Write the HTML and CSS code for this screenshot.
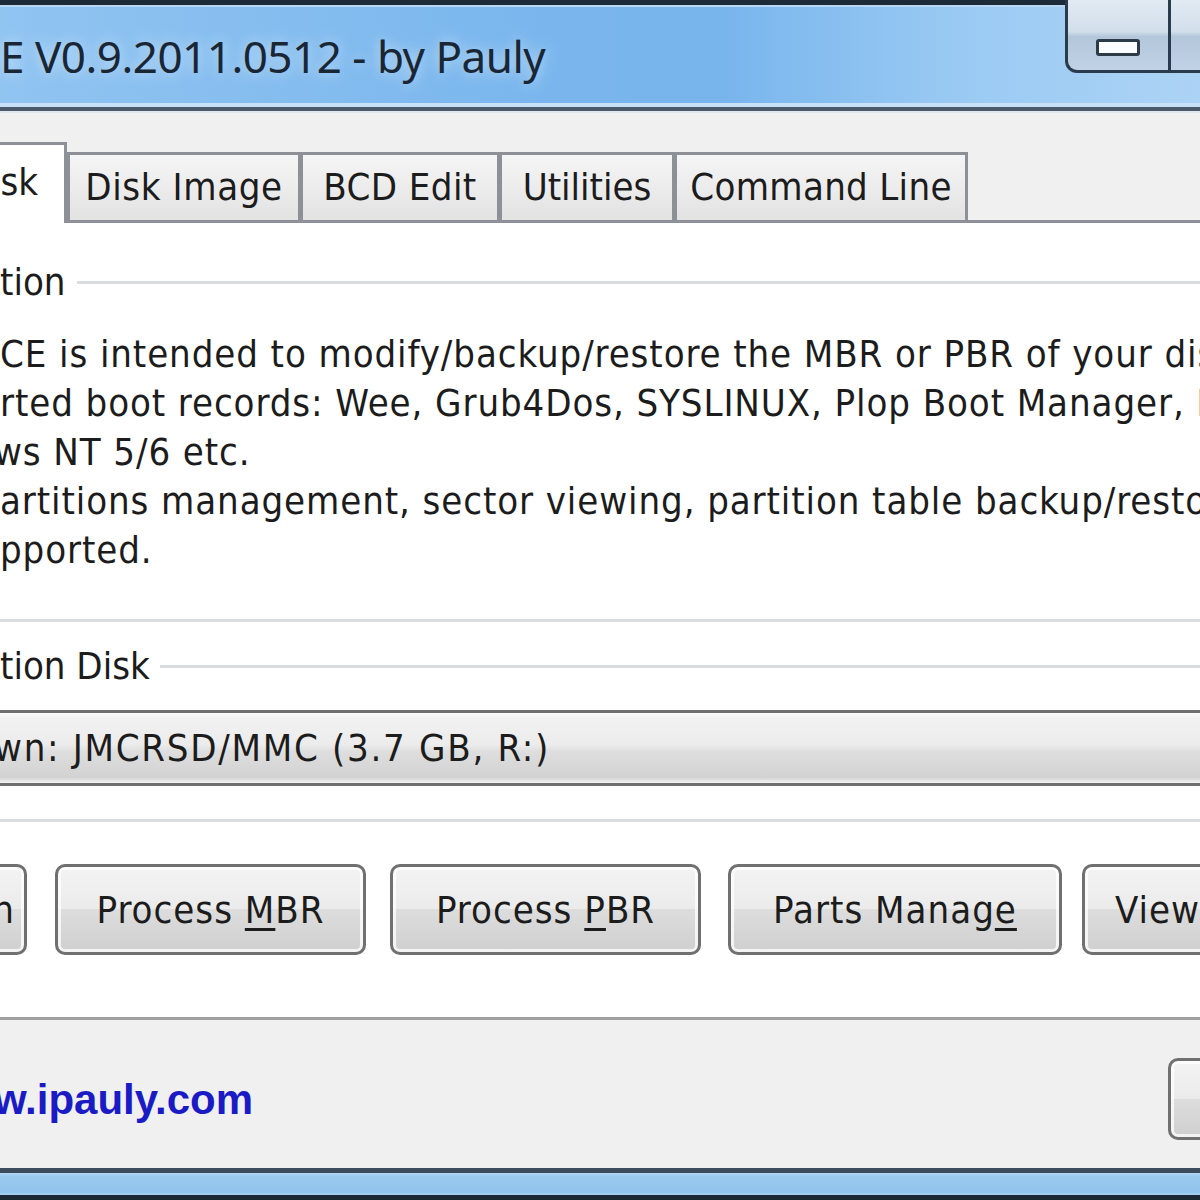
FILE: index.html
```html
<!DOCTYPE html>
<html>
<head>
<meta charset="utf-8">
<link rel="stylesheet" href="styles.css">
</head>
<body>
<div class="window">
  <div class="titlebar">
    <div class="title">E V0.9.2011.0512 - by Pauly</div>
    <div class="caption">
      <div class="cap-btn cap-min"><span class="min-glyph"></span></div>
      <div class="cap-btn cap-max"></div>
    </div>
  </div>
  <div class="client">
    <div class="tabs">
      <div class="tab tab-sel">Disk</div>
      <div class="tab tab-img">Disk Image</div>
      <div class="tab tab-bcd">BCD Edit</div>
      <div class="tab tab-util">Utilities</div>
      <div class="tab tab-cmd">Command Line</div>
    </div>
    <div class="panel">
      <div class="group group-desc">
        <div class="legend"><span class="legend-text">tion</span><span class="legend-line"></span></div>
        <div class="desc">
          <div class="desc-line">CE is intended to modify/backup/restore the MBR or PBR of your disks.</div>
          <div class="desc-line">rted boot records: Wee, Grub4Dos, SYSLINUX, Plop Boot Manager, MS-DOS,</div>
          <div class="desc-line cut">ws NT 5/6 etc.</div>
          <div class="desc-line">artitions management, sector viewing, partition table backup/restore are also</div>
          <div class="desc-line">pported.</div>
        </div>
      </div>
      <div class="group group-disk">
        <div class="legend"><span class="legend-text">tion Disk</span><span class="legend-line"></span></div>
        <div class="combo"><span class="combo-text">wn: JMCRSD/MMC (3.7 GB, R:)</span></div>
      </div>
      <div class="buttons">
        <div class="btn btn-refresh"><span>Refresh</span></div>
        <div class="btn btn-mbr"><span>Process <u>M</u>BR</span></div>
        <div class="btn btn-pbr"><span>Process <u>P</u>BR</span></div>
        <div class="btn btn-parts"><span>Parts Manag<u>e</u></span></div>
        <div class="btn btn-view"><span>View Sectors</span></div>
      </div>
    </div>
    <div class="footer">
      <span class="link">w.ipauly.com</span>
      <div class="btn btn-exit"></div>
    </div>
  </div>
  <div class="bottom-frame"></div>
</div>
</body>
</html>
```

FILE: styles.css
```css
* { box-sizing: border-box; }
html, body { margin: 0; padding: 0; }
body {
  width: 1200px;
  height: 1200px;
  overflow: hidden;
  background: #f0f0f0;
  font-family: "DejaVu Sans Condensed", "DejaVu Sans", sans-serif;
  font-stretch: condensed;
  color: #1c1c1c;
}
.window {
  width: 1200px;
  height: 1200px;
  display: flex;
  flex-direction: column;
  overflow: hidden;
}

/* title bar */
.titlebar {
  height: 113px;
  flex: none;
  display: flex;
  background:
    linear-gradient(to bottom, #1d2a38 0, #1d2a38 5px, #b9d7f3 5px, #b9d7f3 7px, rgba(0,0,0,0) 7px, rgba(0,0,0,0) 103px, #c9e1f6 103px, #c9e1f6 107px, #4a5a6b 107px, #4a5a6b 111px, #dfe6ec 111px),
    linear-gradient(to right, #90c4f1 0, #7ab6ed 45%, #78b5ed 60%, #9acaf3 80%, #acd3f5 100%);
}
.title {
  font-family: "Noto Sans", "Open Sans", sans-serif;
  font-size: 44px;
  line-height: 60px;
  padding-top: 26px;
  color: #1a2634;
  letter-spacing: -0.5px;
  white-space: nowrap;
  text-shadow: 0 0 14px rgba(230, 242, 252, 0.8);
}
.caption {
  margin-left: auto;
  display: flex;
  align-self: flex-start;
}
.cap-btn {
  height: 73px;
  border-bottom: 3px solid #2b3b4e;
  background: linear-gradient(to bottom, #e2eaf3 0, #d2dfeb 45%, #b4c7da 52%, #c0d3e6 100%);
}
.cap-min {
  width: 106px;
  border-left: 3px solid #2b3b4e;
  border-right: 3px solid #2b3b4e;
  border-bottom-left-radius: 12px;
  display: flex;
  justify-content: center;
}
.min-glyph {
  width: 44px;
  height: 17px;
  margin-top: 39px;
  border: 3px solid #2d3a48;
  border-radius: 3px;
  background: #fbfdff;
}
.cap-max {
  width: 29px;
}

/* client area */
.client {
  flex: 1;
  display: flex;
  flex-direction: column;
}
.tabs {
  height: 107px;
  padding-top: 32px;
  display: flex;
  align-items: flex-end;
  flex: none;
}
.tab {
  height: 68px;
  border: 3px solid #8d9096;
  border-bottom: none;
  background: linear-gradient(to bottom, #f5f5f5 0, #ececec 50%, #e2e2e2 100%);
  font-size: 38px;
  display: flex;
  align-items: center;
  justify-content: center;
  white-space: nowrap;
  padding-bottom: 2px;
}
.tab-sel {
  width: 110px;
  margin-left: -43px;
  height: 81px;
  margin-bottom: -3px;
  background: #ffffff;
  justify-content: flex-end;
  padding-right: 26px;
  padding-bottom: 5px;
  position: relative;
  z-index: 1;
}
.tab-img { width: 234px; letter-spacing: 0.6px; }
.tab-bcd { width: 200px; margin-left: -1px; letter-spacing: 0.4px; }
.tab-util { width: 176px; margin-left: -1px; }
.tab-cmd { width: 294px; margin-left: -1px; letter-spacing: 0.3px; }

.panel {
  flex: none;
  background: #ffffff;
  border-top: 3px solid #8d9096;
  border-bottom: 3px solid #a0a0a0;
  margin: 0 -30px;
  padding: 35px 30px 62px;
  font-size: 38px;
}
.group {
  border-bottom: 3px solid #dadde0;
  margin-right: -30px;
}
.legend {
  height: 49px;
  display: flex;
  align-items: center;
}
.legend-text {
  white-space: nowrap;
  line-height: 49px;
}
.legend-line {
  flex: 1;
  height: 3px;
  background: #dadde0;
  margin-left: 12px;
}
.group-disk .legend-line { margin-left: 10px; }
.group-desc { padding-bottom: 44px; }
.desc {
  margin-top: 23px;
  line-height: 49px;
  letter-spacing: 0.9px;
}
.desc-line {
  white-space: nowrap;
}
.desc-line.cut { text-indent: -6px; }
.group-disk {
  margin-top: 20px;
  padding-bottom: 33px;
}
.combo {
  margin: 19px -30px 0 -40px;
  padding-left: 40px;
  height: 76px;
  border-top: 3px solid #707070;
  border-bottom: 3px solid #707070;
  background: linear-gradient(to bottom, #fbfbfb 0, #f1f1f1 8%, #ececec 45%, #dedede 55%, #d2d2d2 92%, #f4f4f4 100%);
  display: flex;
  align-items: center;
  white-space: nowrap;
}
.combo-text { margin-left: -6px; letter-spacing: 1.7px; }

.buttons {
  margin-top: 42px;
  height: 91px;
  display: flex;
}
.btn {
  flex: none;
  height: 91px;
  border: 3px solid #707070;
  border-radius: 10px;
  background: linear-gradient(to bottom, #f3f3f3 0, #ebebeb 50%, #dddddd 50%, #cfcfcf 100%);
  box-shadow: inset 0 0 0 3px rgba(255, 255, 255, 0.75);
  display: flex;
  align-items: center;
  justify-content: center;
  white-space: nowrap;
  font-size: 38px;
  letter-spacing: 1px;
  overflow: hidden;
}
.btn u { text-decoration-thickness: 3px; text-underline-offset: 5px; }
.btn-refresh { width: 160px; margin-left: -133px; }
.btn-mbr { width: 311px; margin-left: 28px; }
.btn-pbr { width: 311px; margin-left: 24px; }
.btn-parts { width: 334px; margin-left: 27px; }
.btn-view { width: 300px; margin-left: 20px; justify-content: flex-start; padding-left: 30px; }

.footer {
  flex: 1;
  display: flex;
  align-items: center;
  padding-top: 12px;
}
.link {
  font-family: "Liberation Sans", Arial, sans-serif;
  font-weight: bold;
  font-size: 42px;
  color: #1b1bc6;
  margin-left: -6px;
  white-space: nowrap;
}
.btn-exit {
  margin-left: auto;
  margin-right: -60px;
  width: 92px;
  height: 82px;
  align-self: flex-start;
  margin-top: 26px;
}

.bottom-frame {
  height: 32px;
  flex: none;
  background: linear-gradient(to bottom, #3c4c5c 0, #3c4c5c 5px, #b4d8f4 5px, #9ccbf0 8px, #8fc2ec 24px, #a7d0f2 27px, #1b2733 27px, #1b2733 100%);
}
```
